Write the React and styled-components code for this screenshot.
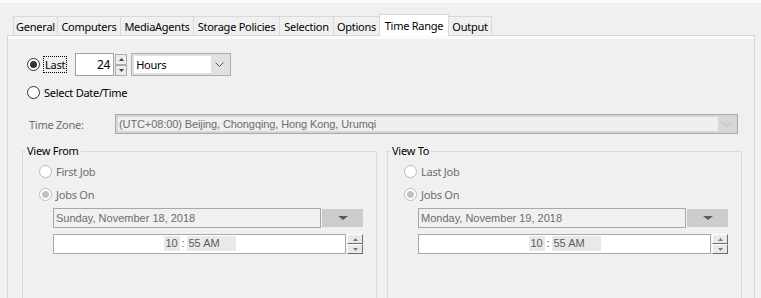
import React from "react";
import styled, { createGlobalStyle } from "styled-components";

const uiFont = `"Noto Sans", "Liberation Sans", sans-serif`;
const fieldFont = `"Liberation Sans", Arial, sans-serif`;

const GlobalStyle = createGlobalStyle`
  html, body { margin: 0; background: #f0f0f0; }
  body { font-family: ${uiFont}; font-size: 11px; letter-spacing: -0.25px; color: #000; }
`;

const tabs = [
  ["General", 44],
  ["Computers", 63],
  ["MediaAgents", 73],
  ["Storage Policies", 86],
  ["Selection", 54],
  ["Options", 46],
  ["Time Range", 69],
  ["Output", 43],
];

const Chevron = ({ color }) => (
  <svg width="9" height="5" viewBox="0 0 9 5">
    <polyline points="0.5,0.5 4.5,4.5 8.5,0.5" fill="none" stroke={color} strokeWidth="1" />
  </svg>
);

const Tri = ({ up, w = 5, h = 3, color = "#555" }) => (
  <svg width={w} height={h} viewBox={`0 0 ${w} ${h}`}>
    <polygon points={up ? `0,${h} ${w / 2},0 ${w},${h}` : `0,0 ${w / 2},${h} ${w},0`} fill={color} />
  </svg>
);

const Radio = ({ checked, disabled, children }) => (
  <RadioRow>
    <Circle $checked={checked} $disabled={disabled} />
    <RadioLabel $disabled={disabled}>{children}</RadioLabel>
  </RadioRow>
);

const Group = ({ title, first, date }) => (
  <Fieldset>
    <Legend>{title}</Legend>
    <GroupBody>
      <Radio disabled>{first}</Radio>
      <Radio disabled checked>Jobs On</Radio>
      <DateRow>
        <DateBox>{date}</DateBox>
        <DropBtn>
          <Tri w={10} h={4} color="#5a5a5a" />
        </DropBtn>
      </DateRow>
      <TimeRow>
        <TimeBox>
          <Seg $w={16} $align="center">10</Seg>
          <Colon>:</Colon>
          <Seg $w={49}>55 AM</Seg>
        </TimeBox>
        <UpDown $raised>
          <SpinHalf $raised><Tri up color="#7a7a7a" /></SpinHalf>
          <SpinHalf $raised><Tri color="#7a7a7a" /></SpinHalf>
        </UpDown>
      </TimeRow>
    </GroupBody>
  </Fieldset>
);

const App = () => (
  <>
    <GlobalStyle />
    <Window>
      <TabBar>
        {tabs.map(([label, w]) => (
          <Tab key={label} $w={w} $active={label === "Time Range"}>
            {label}
          </Tab>
        ))}
      </TabBar>
      <Panel>
        <Options>
          <LastRow>
            <Circle $checked />
            <FocusLabel>Last</FocusLabel>
            <NumberBox>24</NumberBox>
            <UpDown>
              <SpinHalf><Tri up color="#444" /></SpinHalf>
              <SpinHalf><Tri color="#444" /></SpinHalf>
            </UpDown>
            <Select>
              <SelectField>Hours</SelectField>
              <Arrow><Chevron color="#555" /></Arrow>
            </Select>
          </LastRow>
          <SecondRow>
            <Radio>Select Date/Time</Radio>
          </SecondRow>
        </Options>
        <ZoneRow>
          <ZoneLabel>Time Zone:</ZoneLabel>
          <ZoneSelect>
            <ZoneField>(UTC+08:00) Beijing, Chongqing, Hong Kong, Urumqi</ZoneField>
            <Arrow><Chevron color="#bdbdbd" /></Arrow>
          </ZoneSelect>
        </ZoneRow>
        <Groups>
          <Group title="View From" first="First Job" date="Sunday, November 18, 2018" />
          <Group title="View To" first="Last Job" date="Monday, November 19, 2018" />
        </Groups>
      </Panel>
    </Window>
  </>
);

const Window = styled.div`
  box-sizing: border-box;
  width: 761px;
  height: 298px;
  overflow: hidden;
  border-top: 3px solid #fafafa;
`;

const TabBar = styled.div`
  display: flex;
  align-items: flex-end;
  height: 21px;
  margin-top: 11px;
  padding-left: 13px;
`;

const Tab = styled.div`
  box-sizing: border-box;
  position: relative;
  z-index: ${(p) => (p.$active ? 2 : 1)};
  width: ${(p) => p.$w + 1}px;
  height: ${(p) => (p.$active ? 22 : 19)}px;
  margin-bottom: ${(p) => (p.$active ? -1 : 0)}px;
  margin-left: -1px;
  &:first-child {
    margin-left: 0;
  }
  border: 1px solid #d9d9d9;
  border-bottom: none;
  background: ${(p) => (p.$active ? "#fff" : "#f0f0f0")};
  display: flex;
  align-items: center;
  justify-content: center;
  white-space: nowrap;
  padding-bottom: ${(p) => (p.$active ? 1 : 0)}px;
`;

const Panel = styled.div`
  box-sizing: border-box;
  width: 748px;
  height: 264px;
  margin-left: 7px;
  border: 1px solid #d9d9d9;
  box-shadow: inset 0 3px 0 #fafafa;
  padding-top: 17px;
`;

const Options = styled.div`
  padding-left: 19px;
`;

const LastRow = styled.div`
  display: flex;
  align-items: center;
  height: 23px;
`;

const SecondRow = styled.div`
  margin-top: 6px;
`;

const RadioRow = styled.div`
  display: flex;
  align-items: center;
  height: 20px;
`;

const Circle = styled.span`
  box-sizing: border-box;
  flex: none;
  width: 13px;
  height: 13px;
  border-radius: 50%;
  border: 1px solid ${(p) => (p.$disabled ? "#bcbcbc" : "#333")};
  background: #fff;
  display: grid;
  place-items: center;
  &::after {
    content: "";
    width: 7px;
    height: 7px;
    border-radius: 50%;
    background: ${(p) => (p.$disabled ? "#c2c2c2" : "#333")};
    display: ${(p) => (p.$checked ? "block" : "none")};
  }
`;

const RadioLabel = styled.span`
  margin-left: 4px;
  color: ${(p) => (p.$disabled ? "#6d6d6d" : "#000")};
  white-space: nowrap;
`;

const FocusLabel = styled.span`
  margin-left: 4px;
  padding: 0 1px;
  line-height: 15px;
  outline: 1px dotted #000;
  margin-right: 9px;
`;

const NumberBox = styled.div`
  box-sizing: border-box;
  width: 39px;
  height: 23px;
  border: 1px solid #a0a0a0;
  background: #fff;
  display: flex;
  align-items: center;
  justify-content: flex-end;
  padding-right: 3px;
  font-size: 12px;
`;

const UpDown = styled.div`
  display: flex;
  flex-direction: column;
  width: ${(p) => (p.$raised ? 16 : 12)}px;
  height: ${(p) => (p.$raised ? 20 : 22)}px;
  margin-left: 1px;
`;

const SpinHalf = styled.div`
  box-sizing: border-box;
  flex: 1;
  display: grid;
  place-items: center;
  background: ${(p) => (p.$raised ? "#e9e9e9" : "#ececec")};
  border: 1px solid ${(p) => (p.$raised ? "#fff" : "#acacac")};
  border-right-color: ${(p) => (p.$raised ? "#6e6e6e" : "#acacac")};
  border-bottom-color: ${(p) => (p.$raised ? "#6e6e6e" : "#acacac")};
`;

const Select = styled.div`
  box-sizing: border-box;
  width: 100px;
  height: 23px;
  margin-left: 4px;
  border: 1px solid #adadad;
  background: #e1e1e1;
  display: flex;
  align-items: center;
  padding: 2px;
`;

const SelectField = styled.div`
  width: 77px;
  height: 17px;
  background: #fff;
  padding-left: 2px;
  box-sizing: border-box;
  display: flex;
  align-items: center;
`;

const Arrow = styled.div`
  flex: 1;
  display: grid;
  place-items: center;
`;

const ZoneRow = styled.div`
  display: flex;
  align-items: center;
  margin-top: 12px;
  padding-left: 21px;
  height: 20px;
`;

const ZoneLabel = styled.div`
  width: 86px;
  color: #6d6d6d;
`;

const ZoneSelect = styled.div`
  box-sizing: border-box;
  width: 623px;
  height: 20px;
  border: 1px solid #a8a8a8;
  background: #d6d6d6;
  display: flex;
  align-items: center;
  padding: 2px;
`;

const ZoneField = styled.div`
  box-sizing: border-box;
  width: 600px;
  height: 14px;
  background: #efefef;
  padding-left: 1px;
  font-family: ${fieldFont};
  font-size: 11px;
  letter-spacing: -0.1px;
  color: #6d6d6d;
  display: flex;
  align-items: center;
`;

const Groups = styled.div`
  display: grid;
  grid-template-columns: 355px 355px;
  column-gap: 10px;
  margin-top: 10px;
  padding-left: 14px;
`;

const Fieldset = styled.fieldset`
  margin: 0;
  padding: 0;
  min-width: 0;
  height: 170px;
  border: 1px solid #dadada;
`;

const Legend = styled.legend`
  margin-left: 2px;
  padding: 0 2px;
  line-height: 14px;
`;

const GroupBody = styled.div`
  display: flex;
  flex-direction: column;
  padding: 4px 0 0 16px;
  & > ${RadioRow} {
    height: 18px;
  }
  & > ${RadioRow} + ${RadioRow} {
    margin-top: 5px;
  }
`;

const DateRow = styled.div`
  display: flex;
  align-items: center;
  margin: 5px 0 0 14px;
`;

const DateBox = styled.div`
  box-sizing: border-box;
  width: 268px;
  height: 20px;
  border: 1px solid #a8a8a8;
  background: #f0f0f0;
  padding-left: 2px;
  font-family: ${fieldFont};
  font-size: 11px;
  letter-spacing: 0;
  color: #6d6d6d;
  display: flex;
  align-items: center;
`;

const DropBtn = styled.div`
  width: 41px;
  height: 18px;
  margin-left: 1px;
  background: #cccccc;
  display: grid;
  place-items: center;
`;

const TimeRow = styled.div`
  display: flex;
  margin: 6px 0 0 14px;
`;

const TimeBox = styled.div`
  box-sizing: border-box;
  width: 293px;
  height: 20px;
  border: 1px solid #a8a8a8;
  background: #fff;
  display: flex;
  justify-content: center;
  align-items: flex-start;
  padding-top: 1px;
  font-family: ${fieldFont};
  font-size: 11px;
  letter-spacing: 0;
  color: #5a5a5a;
`;

const Seg = styled.span`
  box-sizing: border-box;
  width: ${(p) => p.$w}px;
  height: 15px;
  line-height: 15px;
  background: #e9e9e9;
  text-align: ${(p) => p.$align || "left"};
  padding-left: ${(p) => (p.$align ? 0 : 2)}px;
`;

const Colon = styled.span`
  width: 7px;
  line-height: 15px;
  text-align: center;
`;

export default App;
